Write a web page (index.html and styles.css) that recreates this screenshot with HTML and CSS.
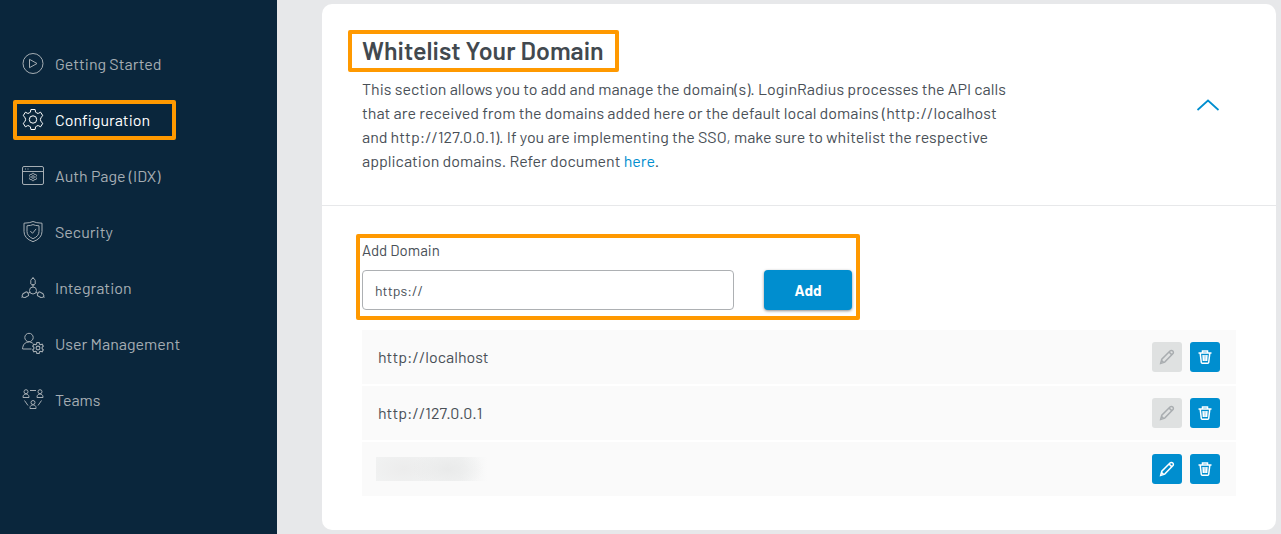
FILE: index.html
```html
<!DOCTYPE html>
<html lang="en">
<head>
<meta charset="utf-8">
<meta name="viewport" content="width=device-width, initial-scale=1">
<title>Whitelist Your Domain</title>
<link rel="stylesheet" href="styles.css">
</head>
<body>
<svg class="sprite" aria-hidden="true">
  <symbol id="gear" viewBox="0 0 24 24">
    <path d="M9.900 1.800h4.200l.6 2.900 2.100 1.200 2.900-1 2.100 3.700-2.200 2v2.800l2.200 2-2.100 3.700-2.900-1-2.100 1.200-.6 2.900H9.900l-.6-2.900-2.100-1.200-2.900 1-2.100-3.700 2.200-2v-2.800l-2.200-2 2.100-3.700 2.900 1 2.100-1.200z"/>
    <circle cx="12" cy="12" r="3.500"/>
  </symbol>
  <symbol id="pencil" viewBox="0 0 16 16">
    <path d="M1.700 14.300l1.100-4.100L11 2a1.700 1.700 0 0 1 2.800 2.800L5.700 13.100zM2.600 11.500l1.900 1.900M10.300 3.300l2.300 2.300"/>
  </symbol>
  <symbol id="trash" viewBox="0 0 16 16">
    <path d="M1.500 4h13M5.500 3.800V1.900h5v1.900M3.200 4.200l1.100 9.300q.1.700.9.700h5.600q.8 0 .9-.7l1.100-9.300M6.100 6l.3 6M8 6v6M9.900 6l-.3 6"/>
  </symbol>
</svg>
<div class="app">
  <nav class="sidebar" aria-label="Main">
    <a class="nav-link" href="#start">
      <svg class="nav-icon" viewBox="0 0 22 22"><circle cx="11" cy="10.500" r="10"/><path d="M7.500 6.300v8.400l7.500-4.200z"/></svg>Getting Started</a>
    <a class="nav-link active" href="#configuration" aria-current="page">
      <svg class="nav-icon" viewBox="0 0 22 22"><path d="M8.900.500h4.200q.1 3 1.700 3.700 1.500.7 3.800-1l2.200 3.500q-2.400 1.600-2.400 3.800t2.400 3.800l-2.200 3.500q-2.300-1.700-3.800-1-1.600.7-1.700 3.700H8.900q-.1-3-1.700-3.700-1.500-.7-3.800 1l-2.200-3.500q2.400-1.600 2.400-3.800T1.200 6.700l2.200-3.500q2.300 1.700 3.800 1Q8.800 3.500 8.900.500z"/><circle cx="11" cy="10.500" r="3.700"/></svg>Configuration</a>
    <a class="nav-link" href="#auth">
      <svg class="nav-icon" viewBox="0 0 22 22"><rect x=".5" y="1.500" width="21" height="18" rx="1.500"/><path d="M.5 6.500h21M3 4h1M5.500 4h1"/><use href="#gear" x="6.500" y="7.500" width="9" height="9" class="small-gear"/></svg>Auth Page (IDX)</a>
    <a class="nav-link" href="#security">
      <svg class="nav-icon" viewBox="0 0 22 22"><path d="M2 2.200Q8 2 11 .5q3 1.500 9 1.700V10.500q0 7-9 10.200Q2 17.500 2 10.500z"/><path d="M5 4.800q4-.2 6-1.200 2 1 6 1.200V10.500q0 4.700-6 7.200Q5 15.200 5 10.500zM8.300 10l2.200 2.300 3.600-4.400"/></svg>Security</a>
    <a class="nav-link" href="#integration">
      <svg class="nav-icon" viewBox="0 0 22 22"><circle cx="11" cy="13.500" r="3.500"/><path id="arm" d="M11 10V7.800M9.700 7.800h2.600M8.800 7V3.300L10 1.500h2l1.200 1.800V7l-.9.800H9.700zM11 1.500V0"/><use href="#arm" transform="rotate(120 11 13.500)"/><use href="#arm" transform="rotate(240 11 13.500)"/></svg>Integration</a>
    <a class="nav-link" href="#users">
      <svg class="nav-icon" viewBox="0 0 22 22"><circle cx="7" cy="4.500" r="4.200"/><path d="M9.500 16H.6v-1.200a6.300 6.300 0 0 1 10.200-4.600"/><use href="#gear" x="9.500" y="8.500" width="13" height="13" class="medium-gear"/></svg>User Management</a>
    <a class="nav-link" href="#teams">
      <svg class="nav-icon" viewBox="0 0 22 22"><circle cx="4" cy="2.700" r="2"/><circle cx="18" cy="2.700" r="2"/><circle cx="11" cy="13.500" r="2"/><path d="M1 8.500V8c0-4 6-4 6 0v.5zM15 8.500V8c0-4 6-4 6 0v.5zM8 19.500v-1c0-3.500 6-3.500 6 0v1zM8 1.500h6M2.500 11.500l3.500 5M19.500 11.500l-3.500 5"/></svg>Teams</a>
  </nav>
  <main class="content">
    <section class="card">
      <header class="card-header">
        <div class="intro">
          <h1 class="title highlight">Whitelist Your Domain</h1>
          <p class="description">This section allows you to add and manage the domain(s). LoginRadius processes the API calls that are received from the domains added here or the default local domains (http://localhost and http://127.0.0.1). If you are implementing the SSO, make sure to whitelist the respective application domains. Refer document <a class="link" href="#docs">here</a>.</p>
        </div>
        <button class="collapse" type="button" aria-label="Collapse section">
          <svg class="chevron" viewBox="0 0 24 14"><path d="M1.500 12L12 2.500L22.500 12"/></svg>
        </button>
      </header>
      <div class="card-body">
        <form class="add-form highlight">
          <label class="label" for="domain">Add Domain</label>
          <div class="form-row">
            <input class="field" id="domain" type="text" value="https://">
            <button class="add" type="button">Add</button>
          </div>
        </form>
        <ul class="domains">
          <li class="domain"><span class="name">http://localhost</span>
            <button class="action" type="button" aria-label="Edit http://localhost" disabled><svg class="glyph"><use href="#pencil"/></svg></button>
            <button class="action" type="button" aria-label="Delete http://localhost"><svg class="glyph"><use href="#trash"/></svg></button></li>
          <li class="domain"><span class="name">http://127.0.0.1</span>
            <button class="action" type="button" aria-label="Edit http://127.0.0.1" disabled><svg class="glyph"><use href="#pencil"/></svg></button>
            <button class="action" type="button" aria-label="Delete http://127.0.0.1"><svg class="glyph"><use href="#trash"/></svg></button></li>
          <li class="domain"><span class="name"><span class="redacted"></span></span>
            <button class="action" type="button" aria-label="Edit domain"><svg class="glyph"><use href="#pencil"/></svg></button>
            <button class="action" type="button" aria-label="Delete domain"><svg class="glyph"><use href="#trash"/></svg></button></li>
        </ul>
      </div>
    </section>
  </main>
</div>
</body>
</html>
```
FILE: styles.css
```css
* { box-sizing: border-box; }
body {
  margin: 0;
  font-family: Barlow, Roboto, "Liberation Sans", sans-serif;
  font-size: 16px;
  line-height: 24px;
  color: #495057;
}
button, input { font-family: inherit; }
svg { fill: none; stroke: currentColor; }
.sprite { position: absolute; width: 0; height: 0; }
.app { display: flex; min-height: 100vh; background: #e7e8ea; }

.sidebar {
  display: flex;
  flex-direction: column;
  flex: 0 0 277px;
  gap: 16px;
  padding: 44px 13px;
  background: #0a263c;
}
.nav-link {
  display: flex;
  align-items: center;
  align-self: flex-start;
  gap: 11px;
  min-width: 163px;
  height: 40px;
  padding: 0 5px;
  border: 4px solid transparent;
  border-radius: 2px;
  color: #a5adb3;
  text-decoration: none;
  white-space: nowrap;
}
.nav-link.active { border-color: #ff9900; color: #fff; }
.nav-icon { flex: none; width: 22px; height: 22px; overflow: visible; }
.small-gear { stroke-width: 2.5; }
.medium-gear { stroke-width: 2; }

.content { flex: 1; min-width: 0; padding: 4px 5px 4px 45px; }
.card { background: #fff; border-radius: 10px; }
.card-header {
  display: flex;
  align-items: center;
  justify-content: space-between;
  gap: 24px;
  padding: 26px 56px 32px 40px;
  border-bottom: 1px solid #e7e8ea;
}
.highlight { border: 4px solid #ff9900; border-radius: 2px; }
.title {
  width: fit-content;
  margin: 0 0 5px -14px;
  padding: 0 11px 2px 10px;
  font-size: 25px;
  line-height: 32px;
  font-weight: 600;
  color: #42494f;
}
.description { max-width: 656px; margin: 0; }
.link { color: #008ecf; text-decoration: none; }
.collapse { display: flex; padding: 6px 0 0; border: 0; background: none; color: #008ecf; }
.chevron { width: 24px; height: 14px; stroke-width: 1.7; }

.card-body { padding: 28px 40px 34px; }
.add-form {
  width: fit-content;
  margin: 0 0 10px -6px;
  padding: 0 4px 6px 2px;
}
.label { display: block; padding-bottom: 8px; font-size: 15px; }
.form-row { display: flex; gap: 30px; }
.field {
  width: 372px;
  height: 40px;
  padding: 0 12px;
  border: 1px solid #adb0b3;
  border-radius: 4px;
  background: #fff;
  color: #495057;
  font-size: 14px;
}
.add {
  width: 88px;
  height: 40px;
  border: 0;
  border-radius: 4px;
  background: #008ecf;
  box-shadow: 0 1px 3px rgba(0, 0, 0, .45);
  color: #fff;
  font-size: 15px;
  font-weight: 700;
}

.domains { display: grid; gap: 2px; margin: 0; padding: 0; list-style: none; }
.domain {
  display: flex;
  align-items: center;
  gap: 8px;
  height: 54px;
  padding: 0 16px;
  background: #fafafa;
}
.name { flex: 1; }
.redacted {
  display: block;
  width: 112px;
  height: 24px;
  margin: 0 0 0 -2px;
  background:
    radial-gradient(ellipse 36px 20px at 72px 12px, #e9eaea, transparent),
    radial-gradient(ellipse 36px 20px at 28px 12px, #ececec, transparent),
    linear-gradient(90deg, #f1f2f2, #f1f2f2 75%, #fafafa);
}
.action {
  display: grid;
  place-items: center;
  width: 30px;
  height: 30px;
  padding: 0;
  border: 0;
  border-radius: 3px;
  background: #008ecf;
  color: #fff;
}
.action:disabled { background: #dfe1e1; color: #a9adb0; }
.glyph { width: 16px; height: 16px; stroke-width: 1.5; }
```
